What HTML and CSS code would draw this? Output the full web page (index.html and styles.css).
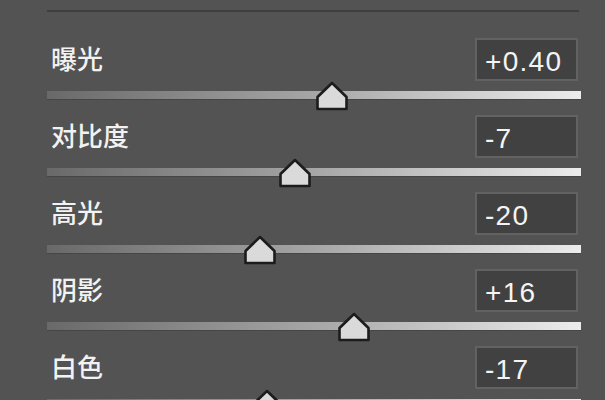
FILE: index.html
```html
<!DOCTYPE html>
<html lang="zh">
<head>
<meta charset="utf-8">
<link rel="stylesheet" href="styles.css">
</head>
<body>
<div class="panel">
  <div class="rule"></div>

  <div class="row">
    <div class="head"><span class="label">曝光</span><div class="value">+0.40</div></div>
    <div class="track">
      <svg class="thumb" style="left:53.4%" viewBox="0 0 34 30" width="34" height="30"><path d="M17 2 L31.5 16 V28 H2.5 V16 Z"/></svg>
    </div>
  </div>

  <div class="row">
    <div class="head"><span class="label">对比度</span><div class="value">-7</div></div>
    <div class="track">
      <svg class="thumb" style="left:46.4%" viewBox="0 0 34 30" width="34" height="30"><path d="M17 2 L31.5 16 V28 H2.5 V16 Z"/></svg>
    </div>
  </div>

  <div class="row">
    <div class="head"><span class="label">高光</span><div class="value">-20</div></div>
    <div class="track">
      <svg class="thumb" style="left:39.9%" viewBox="0 0 34 30" width="34" height="30"><path d="M17 2 L31.5 16 V28 H2.5 V16 Z"/></svg>
    </div>
  </div>

  <div class="row">
    <div class="head"><span class="label">阴影</span><div class="value">+16</div></div>
    <div class="track">
      <svg class="thumb" style="left:57.5%" viewBox="0 0 34 30" width="34" height="30"><path d="M17 2 L31.5 16 V28 H2.5 V16 Z"/></svg>
    </div>
  </div>

  <div class="row">
    <div class="head"><span class="label">白色</span><div class="value">-17</div></div>
    <div class="track">
      <svg class="thumb" style="left:41.2%" viewBox="0 0 34 30" width="34" height="30"><path d="M17 2 L31.5 16 V28 H2.5 V16 Z"/></svg>
    </div>
  </div>
</div>
</body>
</html>
```

FILE: styles.css
```css
html, body {
  margin: 0;
  padding: 0;
  background: #535353;
  overflow: hidden;
}

.panel {
  width: 534px;
  margin-left: 47px;
  padding-top: 10px;
  display: flex;
  flex-direction: column;
}

.rule {
  height: 2px;
  background: #3e3e3e;
  margin-right: 2px;
  margin-bottom: 26px;
}

.row {
  display: flex;
  flex-direction: column;
  gap: 10px;
  margin-bottom: 16px;
}

.head {
  display: flex;
  align-items: center;
  justify-content: space-between;
  padding-left: 4px;
  padding-right: 3px;
  height: 43px;
}

.label {
  font-family: "Noto Sans CJK SC", "Noto Sans", sans-serif;
  font-size: 26px;
  font-weight: 500;
  color: #f2f2f2;
  line-height: 1;
  margin-top: -3px;
}

.value {
  box-sizing: border-box;
  width: 103px;
  height: 43px;
  border: 2px solid #626262;
  background: #414141;
  color: #f4f4f4;
  font-family: "Liberation Sans", Arial, sans-serif;
  font-size: 28px;
  letter-spacing: 1.3px;
  line-height: 43px;
  padding-left: 8px;
  display: flex;
  align-items: center;
  padding-top: 4px;
}

.track {
  position: relative;
  height: 8px;
  background: linear-gradient(to right, #696969 0%, #a6a6a6 50%, #ececec 100%);
  box-shadow: 0 1px 0 #464646;
}

.thumb {
  position: absolute;
  top: -10px;
  margin-left: -17px;
  overflow: visible;
}

.thumb path {
  fill: #dadada;
  stroke: #1c1c1c;
  stroke-width: 2.6;
  stroke-linejoin: round;
}
```
